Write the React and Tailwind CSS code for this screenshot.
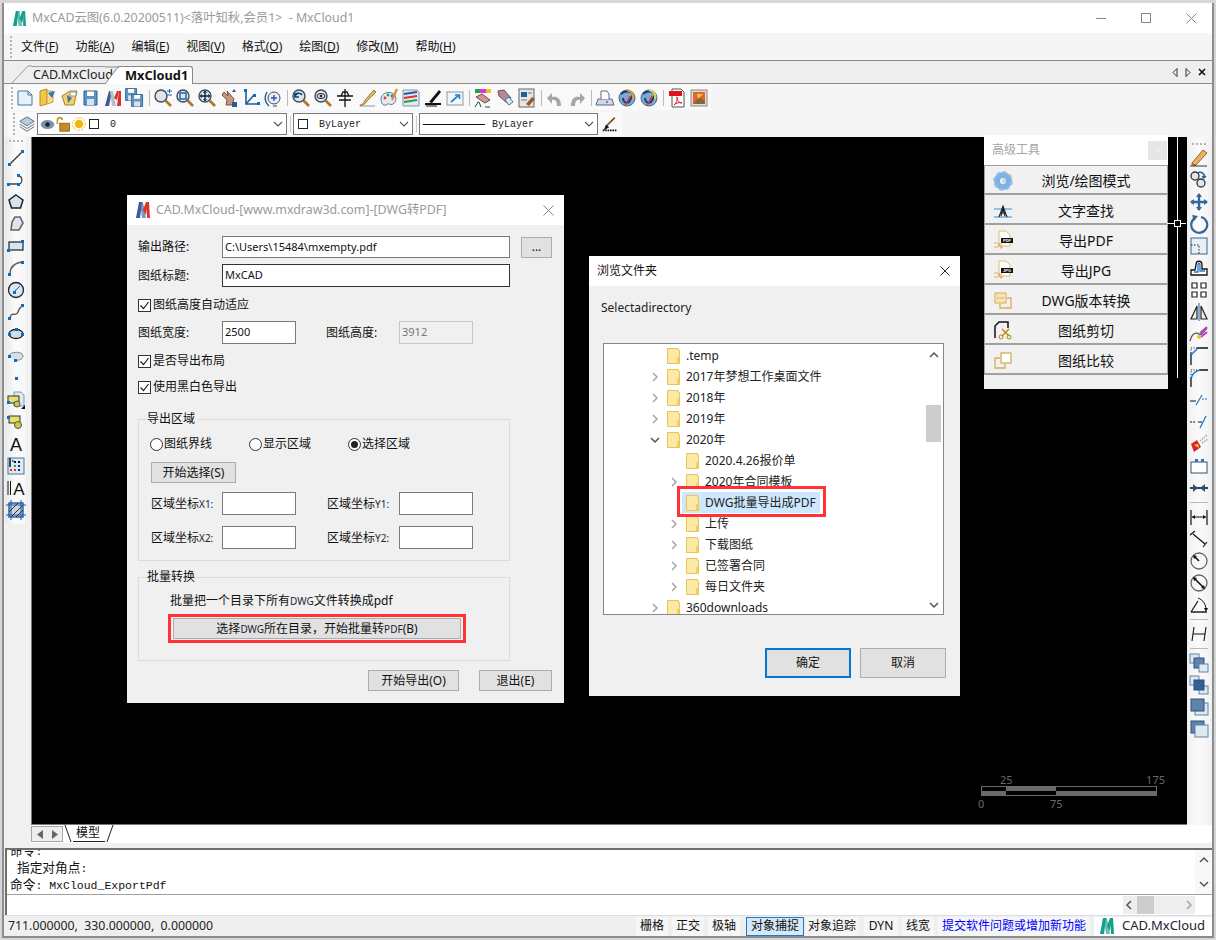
import React from "react";

const H = (x, y, s = 3) => <rect x={x} y={y} width={s} height={s} fill="#0b6bc9" />;
const Svg = ({ children, w = 20, h = 20, vb = "0 0 20 20" }) => (
  <svg width={w} height={h} viewBox={vb} fill="none" className="block shrink-0">{children}</svg>
);
const Logo = ({ w = 14, h = 16, a = "#12a08c", b = "#12a08c" }) => (
  <svg width={w} height={h} viewBox="0 0 14 16" className="block shrink-0">
    <path d="M0 16L3 0H6L4 16Z" fill={a} />
    <path d="M4 0H7L10 16H6Z" fill={a} opacity=".65" />
    <path d="M7 8L10 0H12L10 13Z" fill={b} />
    <path d="M11 0H13L14 16H11Z" fill={b} />
  </svg>
);
const Folder = () => (
  <svg width="13" height="16" viewBox="0 0 13 16" className="block shrink-0">
    <path d="M.5.5H11.5V2.5H12.5V15.5H.5Z" fill="#fde9a6" stroke="#eac455" />
    <path d="M10 9H12V15H10Z" fill="#f6cf5e" />
  </svg>
);
const Mag = ({ children }) => (
  <Svg>
    <circle cx="8" cy="8" r="6" fill="#dbe5ee" stroke="#3b4c5c" strokeWidth="1.4" />
    <path d="M12.5 12.5L18 18" stroke="#a9772e" strokeWidth="2.6" />
    {children}
  </Svg>
);
const Floppy = ({ d = 0 }) => (
  <g transform={`translate(${d} ${d})`}>
    <path d="M3 3H16V17H3Z" fill="#5d93c5" stroke="#2f5f8c" />
    <path d="M6 3.5H13V8H6Z" fill="#fff" />
    <path d="M6 11H13V17H6Z" fill="#d7e2ec" />
  </g>
);
const Globe = ({ c = "#e9a022" }) => (
  <Svg>
    <circle cx="10" cy="10" r="8" fill="#7fa8c9" stroke="#4d6c8c" />
    <path d="M4 6C8 2 15 3 16 7L12 14C9 16 6 14 6 10" stroke="#0b3f8f" strokeWidth="2" />
    <path d="M10 2C14 3 17 6 16 11" stroke={c} strokeWidth="2" />
    <path d="M8 18L13 8" stroke="#d8342c" strokeWidth="1.4" />
  </Svg>
);

const top1 = [
  <Svg><path d="M3 3H13L17 7V17H3Z" fill="#e8f0f8" stroke="#3c78a8" /><path d="M13 3V7H17" stroke="#3c78a8" /></Svg>,
  <Svg><path d="M3 3L10 1V16L3 18Z" fill="#f3c64f" stroke="#b98a25" /><path d="M10 3H16V14L10 16Z" fill="#f8dc8a" stroke="#c9a33c" /><path d="M11 5L18 3L15 10Z" fill="#1f78c8" /></Svg>,
  <Svg><path d="M3 8L11 3L18 3L15 17H6Z" fill="#f2cf69" stroke="#a98526" /><path d="M8 7L13 10L9 15Z" fill="#3d6fa8" /><path d="M11 4H17V8H11Z" fill="#fff" stroke="#999" /></Svg>,
  <Svg><Floppy /></Svg>,
  <Svg><path d="M2 18L6 3H9L6 18Z" fill="#3a5c9a" /><path d="M7 3H10L13 18H9Z" fill="#b9bfc9" /><path d="M11 10L14 3H16L14 12Z" fill="#d8342c" /><path d="M14 18L16 3H18L18 18Z" fill="#d8342c" /></Svg>,
  <Svg><g transform="translate(-2 -2) scale(.85)"><Floppy /></g><g transform="translate(4 4) scale(.85)"><Floppy /></g></Svg>,
  <Mag><path d="M14 3H19M16.5 1V5M14 7H19" stroke="#2463a8" /></Mag>,
  <Mag><rect x="5" y="5" width="6" height="6" stroke="#1f5f9e" strokeWidth="1.4" /></Mag>,
  <Mag><path d="M8 3.5V12.5M3.5 8H12.5" stroke="#123" strokeWidth="1.4" /><path d="M6.5 5L8 3L9.5 5M6.5 11L8 13L9.5 11M5 6.5L3 8L5 9.5M11 6.5L13 8L11 9.5" stroke="#123" /></Mag>,
  <Svg><path d="M3 7L8 12L7 17H13L15 11L8 3L9 8L5 4Z" fill="#c9947c" stroke="#7a5240" /><path d="M13 14H18V19H13Z" fill="#1f5f9e" /><path d="M15 1L17 4H13Z" fill="#1f5f9e" /></Svg>,
  <Svg><path d="M5 2V16H18" stroke="#1f5f9e" strokeWidth="1.6" /><path d="M5 16L13 7" stroke="#1f5f9e" strokeWidth="1.6" />{H(3, 1)}{H(16, 14)}{H(12, 6)}</Svg>,
  <Svg><circle cx="11" cy="10" r="6" fill="#e8eef4" stroke="#3b4c5c" /><path d="M8 10H14M11 7V13" stroke="#1f5f9e" strokeWidth="1.4" /><path d="M4 4C1 9 2 14 6 18" stroke="#1f5f9e" strokeWidth="1.4" /><path d="M14 18H10" stroke="#444" /></Svg>,
  <Mag><path d="M4 9C4 5 9 4 11 7M4 5V9H8" stroke="#123a70" strokeWidth="1.6" /></Mag>,
  <Mag><ellipse cx="8" cy="8" rx="4" ry="2.5" stroke="#222" /><circle cx="8" cy="8" r="1.3" fill="#222" /></Mag>,
  <Svg><path d="M10 1V19M2 8H18M4 12H16M6 8L8 4H12L14 8" stroke="#111" strokeWidth="1.3" /></Svg>,
  <Svg><path d="M3 17C7 17 7 12 9 11L17 2L19 4L10 13C9 15 7 17 3 18Z" fill="#e9b45c" stroke="#8d6426" strokeWidth=".8" /><path d="M3 18H18" stroke="#999" /></Svg>,
  <Svg><path d="M2 11C2 6 8 3 13 5C18 7 18 14 14 16C11 18 10 14 7 17C4 18 2 15 2 11Z" fill="#e4e9f0" stroke="#5a7ca3" /><circle cx="6" cy="10" r="1.4" fill="#d8342c" /><circle cx="9" cy="7" r="1.4" fill="#2f9e44" /><circle cx="13" cy="8" r="1.4" fill="#1f78c8" /><path d="M13 12L18 1" stroke="#d98b1f" strokeWidth="2" /></Svg>,
  <Svg><path d="M2 2H16L18 4V18H2Z" fill="#dfe9f2" stroke="#7a97b3" /><path d="M3 6L16 4" stroke="#1f5f9e" strokeWidth="2" /><path d="M3 10L16 8" stroke="#d8342c" strokeWidth="2" /><path d="M3 14L16 12" stroke="#2f9e44" strokeWidth="2" /></Svg>,
  <Svg><path d="M2 16H18" stroke="#111" strokeWidth="2" /><path d="M6 14L16 2L18 4L9 15Z" fill="#111" /><path d="M3 18H14" stroke="#111" /></Svg>,
  <Svg><rect x="2" y="4" width="16" height="13" fill="#f3f6f9" stroke="#8a97a3" /><path d="M6 14L14 7M10 7H14.5V11" stroke="#1f8ad1" strokeWidth="1.7" /></Svg>,
  <Svg><rect x="2" y="1" width="16" height="4" fill="#d43ad1" /><rect x="2" y="1" width="5" height="4" fill="#2f9e44" /><rect x="13" y="1" width="5" height="4" fill="#e9c522" /><path d="M3 9L9 6L17 12L12 15Z" fill="#c99" stroke="#744" /><path d="M2 19L5 14H6L8 19M12 19H17" stroke="#345" /></Svg>,
  <Svg><path d="M3 3L9 2L16 10L12 15L4 8Z" fill="#b48a94" stroke="#6a4a55" /><path d="M10 12L14 17L18 14L14 9Z" fill="#dfe9f2" stroke="#3c78a8" /></Svg>,
  <Svg><rect x="2" y="1" width="15" height="18" fill="#e6e6e6" stroke="#666" /><rect x="4" y="4" width="6" height="5" fill="#1f5f9e" /><path d="M11 5H15M4 12H10" stroke="#777" /><path d="M9 16L15 9L18 11L12 18Z" fill="#9a5a1f" /></Svg>,
  <Svg><path d="M16 18C16 10 12 8 7 9V5L2 10L7 16V12C10 11 12 13 12 18Z" fill="#a6a6a6" /></Svg>,
  <Svg><path d="M4 18C4 10 8 8 13 9V5L18 10L13 16V12C10 11 8 13 8 18Z" fill="#a6a6a6" /></Svg>,
  <Svg><path d="M3 11H17L19 17H1Z" fill="#cfd6e4" stroke="#5d6a8a" /><path d="M6 11V3H12L14 6V11" fill="#fff" stroke="#5d6a8a" /><circle cx="12" cy="14" r="1" fill="#5d6a8a" /></Svg>,
  <Globe />,
  <Globe c="#f3d24f" />,
  <Svg><path d="M5 1H14L17 4V19H5Z" fill="#fff" stroke="#555" /><rect x="2" y="3" width="13" height="5" fill="#e0141e" /><path d="M7 17C10 14 11 11 10 9C9 12 13 15 15 15C12 14 9 15 7 17Z" stroke="#e0141e" /></Svg>,
  <Svg><rect x="2" y="2" width="16" height="16" fill="#ddd" stroke="#888" /><rect x="4" y="4" width="12" height="12" fill="#e8642c" /><path d="M4 16L10 9L16 13V16Z" fill="#7c6a3a" /><path d="M8 6H14L9 11Z" fill="#f6c64a" /></Svg>,
];
const groups1 = [[0, 6], [6, 12], [12, 20], [20, 23], [23, 25], [25, 28], [28, 30]];

const left = [
  <Svg><path d="M4 16L16 4" stroke="#333" strokeWidth="1.3" />{H(2, 15)}{H(15, 2)}</Svg>,
  <Svg><path d="M3 14H13M12 6C17 6 17 13 13 14" stroke="#444" strokeWidth="1.3" />{H(1, 13)}{H(11, 13)}{H(11, 4)}</Svg>,
  <Svg><path d="M10 3L17 8L14.5 16H5.5L3 8Z" fill="#d8e4f0" stroke="#222" strokeWidth="1.5" /></Svg>,
  <Svg><path d="M9 3H14L17 9L13 16H5L6 8Z" fill="#dce6f2" stroke="#666" strokeWidth="1.6" /></Svg>,
  <Svg><rect x="3" y="6" width="14" height="8" fill="#d8e4f0" stroke="#222" strokeWidth="1.2" />{H(1, 13)}{H(15, 4)}</Svg>,
  <Svg><path d="M4 16C4 9 9 5 16 4" stroke="#665" strokeWidth="1.5" />{H(2, 15)}{H(15, 3)}</Svg>,
  <Svg><circle cx="10" cy="10" r="7.5" fill="#dde7f2" stroke="#222" strokeWidth="1.3" /><path d="M8 12L14 6" stroke="#0b6bc9" />{H(7, 11)}</Svg>,
  <Svg><path d="M4 16C6 8 10 16 12 10S15 6 16 4" stroke="#555" strokeWidth="1.4" />{H(2, 15)}{H(15, 2)}</Svg>,
  <Svg><ellipse cx="10" cy="10" rx="7" ry="4.5" fill="#cfdcea" stroke="#222" strokeWidth="1.3" />{H(9, 4)}{H(2, 9)}{H(15, 9)}</Svg>,
  <Svg><path d="M3 10C4 5 17 5 17 10C17 14 11 15 8 14" fill="#d5dfea" stroke="#888" />{H(2, 9)}{H(8, 13)}</Svg>,
  <Svg>{H(9, 9)}</Svg>,
  <Svg><path d="M8 2H15L18 5V16H8Z" fill="#dfe9f2" stroke="#7a97b3" /><rect x="2" y="6" width="11" height="7" fill="#e7e06a" stroke="#333" /><circle cx="11" cy="14" r="3" fill="#c8c84f" stroke="#555" />{H(1, 11)}<path d="M15 19L19 15V19Z" fill="#111" /></Svg>,
  <Svg><rect x="3" y="4" width="11" height="7" fill="#e7e06a" stroke="#333" /><circle cx="12" cy="13" r="3.5" fill="#c8c84f" stroke="#555" />{H(1, 4)}</Svg>,
  <Svg><text x="10" y="17" textAnchor="middle" fontSize="18" fill="#111" fontFamily="Liberation Sans">A</text></Svg>,
  <Svg><rect x="2" y="2" width="16" height="16" fill="#dfe9f2" stroke="#3c78a8" />{H(6, 4, 1.8)}<path d="M4 2V11" stroke="#111" strokeWidth="1.5" /><rect x="8" y="5" width="2" height="2" fill="#111" /><rect x="12" y="5" width="2" height="2" fill="#111" /><rect x="8" y="9" width="2" height="2" fill="#2f9e44" /><rect x="12" y="9" width="2" height="2" fill="#123a70" /><rect x="4" y="13" width="2" height="2" fill="#d8342c" /><rect x="8" y="13" width="2" height="2" fill="#d8342c" /><rect x="12" y="13" width="2" height="2" fill="#123a70" /></Svg>,
  <Svg><path d="M2 3V17M4.5 3V17" stroke="#111" /><text x="13" y="17" textAnchor="middle" fontSize="17" fill="#111" fontFamily="Liberation Sans">A</text></Svg>,
  <Svg><rect x="3" y="3" width="14" height="14" fill="#c8d4e0" stroke="#1f5f9e" strokeWidth="1.4" /><path d="M0 5H20M0 15H20M5 0V20M15 0V20" stroke="#1f5f9e" /><path d="M3 12L12 3M6 16L16 6M10 17L17 10" stroke="#333" /></Svg>,
];

const right = [
  [158, <Svg><path d="M3 15L14 2L18 5L7 17H3Z" fill="#e9b45c" stroke="#8d6426" /><path d="M3 15L7 17L5 18Z" fill="#d8342c" /><path d="M1 18H18" stroke="#333" /></Svg>],
  [180, <Svg><circle cx="6" cy="6" r="4" stroke="#333" strokeWidth="1.3" fill="#dfe6ee" /><circle cx="12" cy="13" r="4" stroke="#333" strokeWidth="1.3" fill="#dfe6ee" /><path d="M8 3C13 1 16 4 15 7M13 6L15 8L17 6" stroke="#1f5f9e" strokeWidth="1.4" /></Svg>],
  [203, <Svg><path d="M10 2V18M2 10H18" stroke="#34669a" strokeWidth="2.4" /><path d="M7 5L10 1L13 5ZM7 15L10 19L13 15ZM5 7L1 10L5 13ZM15 7L19 10L15 13Z" fill="#34669a" /></Svg>],
  [225, <Svg><path d="M6 4A8 8 0 1 0 12 3" stroke="#34669a" strokeWidth="2.2" /><path d="M3 1L9 2L5 7Z" fill="#34669a" /></Svg>],
  [247, <Svg><rect x="2" y="2" width="16" height="16" fill="#e8eef4" stroke="#34669a" /><path d="M2 9H10V18" stroke="#222" strokeDasharray="1.5 1.5" /></Svg>],
  [269, <Svg><path d="M2 17V12H6L7 7C7 2 13 2 13 7V11H18V17Z" fill="#fff" stroke="#111" strokeWidth="1.3" /><path d="M5 14H9V7C9 5 11 5 11 7V13H16" stroke="#1f78c8" strokeWidth="1.3" /></Svg>],
  [291, <Svg><path d="M3 3H8V8H3ZM12 3H17V8H12ZM3 12H8V17H3ZM12 12H17V17H12Z" fill="#fff" stroke="#222" strokeWidth="1.2" /></Svg>],
  [313, <Svg><path d="M10 1V19" stroke="#1f5f9e" /><path d="M8 4V17H2ZM12 4V17H18Z" fill="#e8eef4" stroke="#222" strokeWidth="1.2" /></Svg>],
  [336, <Svg><path d="M1 17C3 9 7 8 10 10C13 12 14 8 18 4" stroke="#555" strokeWidth="1.3" /><path d="M11 9L18 3M12 13L18 8" stroke="#c63bc9" strokeWidth="2" /><circle cx="10" cy="13" r="2" fill="#e9c522" /></Svg>],
  [358, <Svg><path d="M2 19V7M8 2H19" stroke="#111" strokeWidth="1.3" /><path d="M2 9L9 2" stroke="#1f78c8" strokeWidth="1.4" /><path d="M2 7V2H8" stroke="#111" strokeDasharray="1 1.5" /></Svg>],
  [380, <Svg><path d="M2 19V9M10 2H19" stroke="#111" strokeWidth="1.3" /><path d="M2 11C3 6 6 3 11 2" stroke="#1f78c8" strokeWidth="1.4" /><path d="M2 7V2H8" stroke="#111" strokeDasharray="1 1.5" /></Svg>],
  [401, <Svg><path d="M1 11H7" stroke="#111" /><path d="M7 15L13 5" stroke="#1f78c8" strokeWidth="1.2" /><path d="M13 9H19" stroke="#1f78c8" strokeDasharray="2 1" /></Svg>],
  [423, <Svg><path d="M1 10H7" stroke="#111" strokeDasharray="2 1" /><path d="M9 10H13" stroke="#111" /><path d="M11 16L17 4" stroke="#1f78c8" strokeWidth="1.2" /></Svg>],
  [445, <Svg><path d="M2 10L8 6L12 13L5 18Z" fill="#d8242c" /><path d="M5 11L9 10L10 14Z" fill="#f6d233" /><path d="M11 7L18 1M13 9L19 5" stroke="#aaa" strokeDasharray="1.5 1" strokeWidth="1.6" /></Svg>],
  [466, <Svg><rect x="2" y="6" width="16" height="11" fill="#fff" stroke="#34507a" /><rect x="6" y="3" width="3" height="3" fill="#1f78c8" /><rect x="12" y="3" width="3" height="3" fill="#1f78c8" /></Svg>],
  [489, <Svg><path d="M1 10H19" stroke="#111" strokeWidth="1.6" /><path d="M4 6L9 10L4 14ZM16 6L11 10L16 14Z" fill="#34507a" /></Svg>],
  [502, null],
  [517, <Svg><path d="M2 3V18M18 3V18M3 10H17" stroke="#111" strokeWidth="1.2" /><path d="M3 10L6 8V12ZM17 10L14 8V12Z" fill="#111" /></Svg>],
  [539, <Svg><path d="M1 6L6 2M14 18L18 13M4 5L16 15" stroke="#111" strokeWidth="1.2" /></Svg>],
  [561, <Svg><circle cx="10" cy="10" r="8" stroke="#666" strokeWidth="1.3" /><path d="M5 5L10 10" stroke="#111" strokeWidth="1.6" /><path d="M4 4L8 5L5 8Z" fill="#111" /></Svg>],
  [583, <Svg><circle cx="10" cy="10" r="8" stroke="#666" strokeWidth="1.3" /><path d="M5 5L15 15" stroke="#111" strokeWidth="1.6" /><path d="M4 4L8 5L5 8ZM16 16L12 15L15 12Z" fill="#111" /></Svg>],
  [605, <Svg><path d="M2 17L9 6" stroke="#111" strokeWidth="1.2" /><path d="M2 17H18" stroke="#111" strokeWidth="1.4" /><path d="M9 3C14 5 17 9 17 15" stroke="#111" /><path d="M17 17L15 13H19Z" fill="#111" /></Svg>],
  [618, null],
  [632, <Svg><path d="M5 3L3 17M17 3L15 17M4 10H16" stroke="#111" strokeWidth="1.1" /></Svg>],
  [647, null],
  [660, <Svg><rect x="1" y="1" width="9" height="9" fill="#dfe9f2" stroke="#5d84ab" /><rect x="5" y="5" width="10" height="10" fill="#5d84ab" stroke="#34507a" /><rect x="10" y="11" width="9" height="8" fill="#dfe9f2" stroke="#5d84ab" /></Svg>],
  [683, <Svg><rect x="1" y="1" width="9" height="9" fill="#dfe9f2" stroke="#5d84ab" /><rect x="10" y="11" width="9" height="8" fill="#dfe9f2" stroke="#5d84ab" /><rect x="5" y="5" width="10" height="10" fill="#34609a" stroke="#2a4a78" /></Svg>],
  [705, <Svg><rect x="6" y="6" width="13" height="12" fill="#dfe9f2" stroke="#5d84ab" /><rect x="2" y="2" width="13" height="12" fill="#5d84ab" stroke="#34507a" /></Svg>],
  [725, <Svg><rect x="2" y="2" width="13" height="12" fill="#5d84ab" stroke="#34507a" /><rect x="6" y="6" width="13" height="12" fill="#dfe9f2" stroke="#5d84ab" /></Svg>],
];

const Grip = () => (
  <span className="flex flex-col gap-[2px] w-[2px] mx-[1px]">
    {[0, 1, 2, 3, 4, 5].map((i) => <span key={i} className="w-[2px] h-[2px] bg-[#b5b5b5]" />)}
  </span>
);
const Down = () => (
  <svg width="10" height="6" viewBox="0 0 10 6" className="shrink-0"><path d="M1 1L5 5L9 1" stroke="#555" fill="none" strokeWidth="1.1" /></svg>
);
const Combo = ({ w, children }) => (
  <div className={`${w} h-[22px] bg-white border border-[#7a7a7a] flex items-center pr-[3px] font-['Liberation_Mono',monospace] text-[10px] text-[#222]`}>
    <div className="flex-1 flex items-center min-w-0">{children}</div>
    <Down />
  </div>
);
const Sq = () => <span className="block w-[10px] h-[10px] border border-[#222] bg-white shrink-0" />;

const Btn = ({ w, h = "h-[21px]", children }) => (
  <button className={`${w} ${h} bg-[#e1e1e1] border border-[#adadad] text-[12px] text-[#111] flex items-center justify-center`}>{children}</button>
);
const Input = ({ w = "w-[74px]", h = "h-[23px]", children, cls = "border-[#7a7a7a] bg-white text-[#111]" }) => (
  <div className={`${w} ${h} border ${cls} flex items-center px-[2px] text-[11px]`}>{children}</div>
);
const Check = ({ children, cls }) => (
  <div className={`flex items-center h-[16px] gap-[2px] text-[12px] text-[#111] ${cls}`}>
    <span className="w-[13px] h-[13px] border border-[#333] bg-white flex items-center justify-center">
      <svg width="11" height="11" viewBox="0 0 11 11"><path d="M1.5 5.5L4.5 8.5L9.5 2" stroke="#222" fill="none" strokeWidth="1.2" /></svg>
    </span>
    <span>{children}</span>
  </div>
);
const Radio = ({ on, children }) => (
  <div className="w-[99px] flex items-center gap-[1px] text-[12px] text-[#111]">
    <span className="w-[13px] h-[13px] rounded-full border border-[#333] bg-white flex items-center justify-center">
      {on && <span className="w-[7px] h-[7px] rounded-full bg-[#222]" />}
    </span>
    <span>{children}</span>
  </div>
);
const Sm = ({ children }) => <span className="text-[10px] text-[#223]">{children}</span>;
const CoordRow = ({ a, b, cls }) => (
  <div className={`flex items-center text-[12px] text-[#111] ${cls}`}>
    <span className="w-[71px]">区域坐标<Sm>{a}:</Sm></span>
    <Input />
    <span className="w-[72px] ml-[31px]">区域坐标<Sm>{b}:</Sm></span>
    <Input />
  </div>
);
const X = ({ c = "#666", s = 11 }) => (
  <svg width={s} height={s} viewBox="0 0 11 11"><path d="M.5.5L10.5 10.5M10.5.5L.5 10.5" stroke={c} /></svg>
);

const ExportDialog = () => (
  <div className="absolute left-[95px] top-[58px] w-[437px] h-[508px] bg-[#f0f0f0] flex flex-col">
    <div className="h-[30px] bg-white flex items-center pl-[8px] pr-[10px] shrink-0">
      <Logo w={16} h={16} a="#3a5c9a" b="#d8342c" />
      <span className="ml-[5px] text-[12.4px] text-[#9a9a9a] flex-1">CAD.MxCloud-[www.mxdraw3d.com]-[DWG转PDF]</span>
      <X c="#888" />
    </div>
    <div className="pl-[11px] pr-[12px] pt-[11px] flex flex-col">
      <div className="flex items-center text-[12px] text-[#111]">
        <span className="w-[84px]">输出路径:</span>
        <Input w="w-[288px]" h="h-[22px]">C:\Users\15484\mxempty.pdf</Input>
        <div className="ml-[11px]"><Btn w="w-[31px]">...</Btn></div>
      </div>
      <div className="flex items-center text-[12px] text-[#111] mt-[6px]">
        <span className="w-[84px]">图纸标题:</span>
        <Input w="w-[288px]" cls="border-[#333] bg-white text-[#111]">MxCAD</Input>
      </div>
      <Check cls="mt-[10px]">图纸高度自动适应</Check>
      <div className="flex items-center text-[12px] text-[#111] mt-[8px]">
        <span className="w-[84px]">图纸宽度:</span>
        <Input>2500</Input>
        <span className="w-[73px] ml-[30px]">图纸高度:</span>
        <Input cls="border-[#c8c8c8] bg-[#f0f0f0] text-[#777]">3912</Input>
      </div>
      <Check cls="mt-[9px]">是否导出布局</Check>
      <Check cls="mt-[10px]">使用黑白色导出</Check>
      <fieldset className="mt-[16px] w-[372px] h-[150px] border border-[#dcdcdc]">
        <legend className="ml-[8px] pr-[2px] text-[12px] leading-[16px] text-[#111]">导出区域</legend>
        <div className="flex pl-[11px] mt-[9px] h-[16px] items-center">
          <Radio>图纸界线</Radio><Radio>显示区域</Radio><Radio on>选择区域</Radio>
        </div>
        <div className="ml-[12px] mt-[10px]"><Btn w="w-[85px]">开始选择(S)</Btn></div>
        <CoordRow a="X1" b="Y1" cls="ml-[12px] mt-[9px]" />
        <CoordRow a="X2" b="Y2" cls="ml-[12px] mt-[11px]" />
      </fieldset>
      <fieldset className="mt-[8px] w-[372px] h-[92px] border border-[#dcdcdc]">
        <legend className="ml-[8px] pr-[2px] text-[12px] leading-[16px] text-[#111]">批量转换</legend>
        <div className="ml-[31px] mt-[8px] h-[16px] leading-[16px] text-[12px] text-[#111]">批量把一个目录下所有<Sm>DWG</Sm>文件转换成pdf</div>
        <div className="ml-[29px] mt-[5px] w-[298px] h-[29px] border-[3px] border-[#ff3333] flex items-center justify-center">
          <Btn w="w-[288px]"><span>选择<Sm>DWG</Sm>所在目录，开始批量转<Sm>PDF</Sm>(B)</span></Btn>
        </div>
      </fieldset>
      <div className="flex justify-end gap-[20px] mt-[9px]">
        <Btn w="w-[91px]">开始导出(O)</Btn>
        <Btn w="w-[73px]">退出(E)</Btn>
      </div>
    </div>
  </div>
);

const treeRows = [
  [1, null, ".temp"], [1, "r", "2017年梦想工作桌面文件"], [1, "r", "2018年"], [1, "r", "2019年"], [1, "d", "2020年"],
  [2, null, "2020.4.26报价单"], [2, "r", "2020年合同模板"], [2, null, "DWG批量导出成PDF", true], [2, "r", "上传"],
  [2, "r", "下载图纸"], [2, "r", "已签署合同"], [2, "r", "每日文件夹"], [1, "r", "360downloads"],
];
const Arrow = ({ d }) => (
  <svg width="12" height="12" viewBox="0 0 12 12" className="block shrink-0">
    <path d={d === "r" ? "M4 2L8 6L4 10" : d === "d" ? "M2 4L6 8L10 4" : d === "u" ? "M2 8L6 4L10 8" : "M8 2L4 6L8 10"} stroke={d === "r" ? "#a6a6a6" : "#555"} strokeWidth="1.5" fill="none" />
  </svg>
);

const BrowseDialog = () => (
  <div className="absolute left-[557px] top-[119px] w-[371px] h-[440px] bg-[#f0f0f0] flex flex-col">
    <div className="h-[30px] bg-white flex items-center pl-[8px] pr-[10px] shrink-0 text-[12px] text-[#111]">
      <span className="flex-1">浏览文件夹</span>
      <X c="#111" s={10} />
    </div>
    <div className="px-[14px] pt-[14px] flex flex-col">
      <div className="h-[16px] leading-[16px] text-[12px] text-[#222] -ml-[2px]">Selectadirectory</div>
      <div className="mt-[27px] w-[341px] h-[272px] border border-[#828790] bg-white flex relative overflow-hidden">
        <div className="flex-1 pt-[1px] flex flex-col min-w-0">
          {treeRows.map(([lvl, ch, t, sel]) => (
            <div key={t} className={`h-[21px] shrink-0 flex items-center ${lvl === 1 ? "pl-[45px]" : "pl-[64px]"} ${sel ? "relative z-20" : ""}`}>
              <span className="w-[18px] h-full flex items-center">{ch && <Arrow d={ch} />}</span>
              <span className={`h-full -ml-[4px] px-[4px] flex items-center gap-[6px] text-[12px] text-[#222] whitespace-nowrap ${sel ? "bg-[#cce8ff]" : ""}`}>
                <Folder />{t}
              </span>
            </div>
          ))}
        </div>
        <div className="w-[15px] mr-[2px] flex flex-col items-center pt-[5px] shrink-0">
          <Arrow d="u" />
          <div className="w-[15px] h-[37px] bg-[#cdcdcd] mt-[44px]" />
          <div className="mt-[157px]"><Arrow d="d" /></div>
        </div>
        <div className="absolute left-[73px] top-[142px] w-[149px] h-[31px] border-[3px] border-[#ff3333] bg-white z-10" />
      </div>
      <div className="flex justify-end gap-[9px] mt-[33px]">
        <Btn w="w-[86px]" h="h-[30px] !border-2 !border-[#0078d7]">确定</Btn>
        <Btn w="w-[86px]" h="h-[30px]">取消</Btn>
      </div>
    </div>
  </div>
);

const Doc = ({ label }) => (
  <Svg w={22} h={20} vb="0 0 22 20">
    <path d="M6 1H13L17 5V16H6Z" fill="#fff" stroke="#e0bd6a" />
    <rect x="8" y="8" width="12" height="5" fill="#111" />
    <text x="14" y="12" fontSize="4" fontWeight="700" fill="#fff" textAnchor="middle" fontFamily="Liberation Sans">{label}</text>
    <path d="M1 13H5L7 17H10M1 17H5L7 13M8 13V19" stroke="#d8ae55" strokeWidth=".9" />
  </Svg>
);
const tools = [
  ["浏览/绘图模式", <Svg><circle cx="10" cy="10" r="6" stroke="#7fb2e2" strokeWidth="6" /><circle cx="10" cy="10" r="9" stroke="#9cc5ea" strokeWidth="2" strokeDasharray="4 3" /><circle cx="11" cy="10" r="2" fill="#b9d6f0" /></Svg>],
  ["文字查找", <Svg><path d="M1 9H19M1 17H19" stroke="#2f8fdc" /><path d="M6 17L10 6L14 17M7.5 13H12.5M8 16L10 9L12 16" stroke="#222" strokeWidth="1.1" /></Svg>],
  ["导出PDF", <Doc label="PDF" />],
  ["导出JPG", <Doc label="JPG" />],
  ["DWG版本转换", <Svg><rect x="2" y="3" width="11" height="10" fill="#f4e3b8" stroke="#d8ae55" /><path d="M14 8H18V18H7V14" stroke="#d8ae55" strokeWidth="1.3" /><path d="M4 8H11" stroke="#b99a55" strokeDasharray="1.5 1" /></Svg>],
  ["图纸剪切", <Svg><path d="M2 18V6L6 2H15V8" stroke="#111" strokeWidth="1.5" /><path d="M9 9L16 16M16 9L9 16" stroke="#b8860b" strokeWidth="1.3" /><circle cx="8" cy="17" r="2" stroke="#b8860b" /><circle cx="16" cy="17" r="2" stroke="#b8860b" /></Svg>],
  ["图纸比较", <Svg><rect x="8" y="3" width="10" height="10" fill="#fff" stroke="#d8ae55" strokeWidth="1.3" /><path d="M7 8H2V18H12V14" stroke="#d8ae55" strokeWidth="1.3" /></Svg>],
];
const ToolPanel = () => (
  <div className="absolute left-[952px] -top-[2px] w-[184px] h-[254px] bg-[#f0f0f0] flex flex-col z-10">
    <div className="h-[30px] bg-white flex items-center pl-[8px] pr-[1px] shrink-0">
      <span className="flex-1 text-[12px] text-[#a6a6a6]">高级工具</span>
      <span className="w-[19px] h-[19px] bg-[#e6e6e6] flex items-center justify-center"><X c="#fff" s={6} /></span>
    </div>
    <div className="border-t border-[#a0a0a0]">
      {tools.map(([t, ic]) => (
        <div key={t} className="h-[30px] box-border border-x border-b-2 border-[#a0a0a0] bg-[#f1f1f1] flex items-center pl-[8px] pr-[8px] pt-[2px] first:h-[29px]">
          <span className="w-[20px] shrink-0">{ic}</span>
          <span className="flex-1 text-center text-[14px] text-[#111]">{t}</span>
        </div>
      ))}
    </div>
  </div>
);

const ScaleBar = () => (
  <div className="absolute left-[949px] top-[636px] w-[176px] text-[11px] leading-[13px] text-[#6a6a6a]">
    <div className="flex h-[13px]">
      <span className="ml-[19px] w-[50px]">25</span><span className="flex-1 text-right -mr-[8px]">175</span>
    </div>
    <div className="h-[10px] border border-[#6a6a6a] flex">
      <span className="w-[24px] mt-[4px] h-[5px] bg-[#6a6a6a]" />
      <span className="w-[50px] h-[4px] bg-[#6a6a6a]" />
      <span className="flex-1 mt-[4px] h-[5px] bg-[#6a6a6a]" />
    </div>
    <div className="flex h-[13px] mt-[1px]">
      <span className="-ml-[3px] w-[72px]">0</span><span>75</span>
    </div>
  </div>
);

const status = [
  ["w-[32px] ml-[0px]", "栅格"], ["w-[32px] ml-[4px]", "正交"], ["w-[32px] ml-[4px]", "极轴"],
];
const status2 = [["w-[52px] ml-[2px]", "对象追踪"], ["w-[34px] ml-[6px]", "DYN"], ["w-[32px] ml-[4px]", "线宽"]];
const Cn = ({ children }) => <span className="text-[12.7px]">{children}</span>;

export default function App() {
  return (
    <div className="relative w-[1216px] h-[940px] overflow-hidden bg-[#d6d6d6] pt-[3px] px-[2px] pb-[2px] font-['Noto_Sans','Noto_Sans_CJK_SC',sans-serif]">
      <div className="h-full border-x-2 border-b-2 border-[#8c8c8c] bg-[#f0f0f0] flex flex-col">
        {/* title */}
        <div className="h-[30px] bg-white flex items-center pl-[9px] shrink-0">
          <Logo w={13} h={15} />
          <span className="ml-[6px] text-[12.35px] text-[#9a9a9a] flex-1 whitespace-pre">{"MxCAD云图(6.0.20200511)<落叶知秋,会员1>  - MxCloud1"}</span>
          <div className="flex items-center">
            <span className="w-[10px] h-px bg-[#888]" />
            <span className="w-[10px] h-[10px] border border-[#888] ml-[35px]" />
            <span className="ml-[35px] mr-[15px]"><X c="#888" /></span>
          </div>
        </div>
        {/* menu */}
        <div className="h-[27px] bg-[#f5f5f5] flex items-center pl-[5px] text-[12px] text-[#111] shrink-0">
          <Grip />
          <div className="flex ml-[8px] gap-[17px]">
            {[["文件", "F"], ["功能", "A"], ["编辑", "E"], ["视图", "V"], ["格式", "O"], ["绘图", "D"], ["修改", "M"], ["帮助", "H"]].map(([a, b]) => (
              <span key={a}>{a}(<u>{b}</u>)</span>
            ))}
          </div>
        </div>
        {/* doc tabs */}
        <div className="h-[24px] border-y border-[#8c8c8c] bg-[#eeeeee] flex items-end shrink-0 text-[12.5px]">
          <svg width="20" height="18" viewBox="0 0 20 18" className="ml-[8px] shrink-0"><path d="M0 18L16 1H20" stroke="#999" fill="none" /></svg>
          <div className="h-[17px] w-[73px] border-t border-[#999] leading-[16px] pl-[1px] text-[#222] whitespace-nowrap">CAD.MxCloud</div>
          <svg width="14" height="18" viewBox="0 0 14 18" className="shrink-0 -mb-px"><path d="M0 18L13 1H14V18Z" fill="#fff" /><path d="M0 18L13 1H14M0 1H14" stroke="#888" fill="none" /></svg>
          <div className="h-[18px] w-[74px] bg-white border-t border-r border-[#888] rounded-tr-[3px] text-[12.8px] leading-[17px] pl-[6px] font-bold text-[#111] -mb-px">MxCloud1</div>
          <div className="flex-1" />
          <div className="flex items-center gap-[7px] h-full pr-[6px] text-[#111]">
            <svg width="6" height="9" viewBox="0 0 6 9"><path d="M5 .5L1 4.5L5 8.5Z" stroke="#333" fill="none" /></svg>
            <svg width="6" height="9" viewBox="0 0 6 9"><path d="M1 .5L5 4.5L1 8.5Z" stroke="#333" fill="none" /></svg>
            <svg width="8" height="8" viewBox="0 0 8 8"><path d="M1 1L7 7M7 1L1 7" stroke="#111" strokeWidth="1.6" /></svg>
          </div>
        </div>
        {/* toolbar 1 */}
        <div className="h-[27px] flex items-center shrink-0 bg-[#f5f5f5]">
          <div className="h-[25px] ml-[4px] pl-[2px] pr-[1px] bg-[#f9f9f9] rounded-[2px] flex items-center">
            <Grip />
            {groups1.map(([a, b], gi) => (
              <React.Fragment key={a}>
                {gi > 0 && <span className="w-[6px] flex justify-center"><span className="w-px h-[16px] bg-[#bbb]" /></span>}
                {top1.slice(a, b).map((ic, i) => (
                  <span key={i} className="w-[22px] h-[22px] flex items-center justify-center">{ic}</span>
                ))}
              </React.Fragment>
            ))}
          </div>
        </div>
        {/* toolbar 2 */}
        <div className="h-[26px] flex items-center shrink-0 bg-[#f5f5f5]">
          <div className="h-[24px] ml-[4px] pl-[4px] bg-[#f9f9f9] flex items-center">
            <Grip />
            <span className="w-[21px] flex justify-center">
              <Svg w={18} h={18}>
                <path d="M10 2L18 7L10 12L2 7Z" fill="#b7cbdd" stroke="#567" />
                <path d="M2 10L10 15L18 10M2 13L10 18L18 13" stroke="#567" />
              </Svg>
            </span>
            <Combo w="w-[250px]">
              <span className="ml-[2px] w-[15px]"><Svg w={15} h={15}><ellipse cx="10" cy="10" rx="9" ry="6" fill="#7c94ab" /><circle cx="10" cy="10" r="3" fill="#123" /></Svg></span>
              <Svg w={16} h={18}><path d="M5 10V5C5 1 11 1 11 5" stroke="#d39422" strokeWidth="2" transform="translate(-2 0)" /><rect x="6" y="9" width="12" height="10" fill="#c98a1f" stroke="#8a5a12" /></Svg>
              <span className="ml-[1px]"><Svg w={14} h={14}><circle cx="10" cy="10" r="6" fill="#f6b511" /><circle cx="10" cy="10" r="9" stroke="#f6c64a" strokeWidth="2" strokeDasharray="2 2" /></Svg></span>
              <span className="ml-[3px]"><Sq /></span>
              <span className="ml-[11px]">0</span>
            </Combo>
            <span className="w-[6px] flex justify-center"><span className="w-px h-[16px] bg-[#ccc]" /></span>
            <Combo w="w-[120px]">
              <span className="ml-[4px]"><Sq /></span>
              <span className="ml-[11px]">ByLayer</span>
            </Combo>
            <span className="w-[6px] flex justify-center"><span className="w-px h-[16px] bg-[#ccc]" /></span>
            <Combo w="w-[179px]">
              <span className="ml-[3px] w-[62px] h-px bg-[#111]" />
              <span className="ml-[7px]">ByLayer</span>
            </Combo>
            <span className="w-[24px] flex justify-center">
              <Svg w={16} h={16}><path d="M5 13L16 2" stroke="#7a4a1f" strokeWidth="2" /><path d="M2 18L5 11L9 14Z" fill="#111" /><path d="M1 18H18" stroke="#111" strokeDasharray="2 1" strokeWidth="2" /></Svg>
            </span>
          </div>
        </div>
        {/* main */}
        <div className="h-[706px] flex shrink-0">
          <div className="w-[27px] shrink-0 bg-[#f0f0f0] border-r-0 pl-[1px]">
            <div className="w-[21px] h-[387px] bg-gradient-to-r from-[#e9e9e9] via-[#fbfbfb] to-[#f6f6f6] rounded-b-[3px] flex flex-col items-center">
              <div className="flex gap-[2px] pt-[3px] h-[10px]">{[0, 1, 2, 3].map((i) => <span key={i} className="w-[2px] h-[2px] bg-[#b5b5b5]" />)}</div>
              {left.map((ic, i) => <span key={i} className="h-[22px] w-[22px] flex items-center justify-center">{ic}</span>)}
            </div>
          </div>
          <div className="flex-1 flex flex-col min-w-0">
            <div className="relative flex-1 bg-black border-l border-b border-[#777]">
              <ExportDialog />
              <BrowseDialog />
              <ToolPanel />
              <div className="absolute left-[1145px] top-0 w-px h-[241px] bg-white" />
              <div className="absolute left-[1135px] top-[86px] w-[19px] h-px bg-white z-20" />
              <div className="absolute left-[1142px] top-[83px] w-[7px] h-[7px] border border-white bg-black z-20" />
              <ScaleBar />
            </div>
            <div className="h-[18px] shrink-0 bg-white flex items-center">
              <div className="h-[16px] w-[32px] border border-[#a6a6a6] bg-[#eeeeee] flex items-center justify-around">
                <svg width="6" height="9" viewBox="0 0 6 9"><path d="M6 0L0 4.5L6 9Z" fill="#666" /></svg>
                <svg width="6" height="9" viewBox="0 0 6 9"><path d="M0 0L6 4.5L0 9Z" fill="#666" /></svg>
              </div>
              <svg width="9" height="18" viewBox="0 0 9 18" className="ml-[1px]"><path d="M1 0L7 17" stroke="#222" fill="none" /></svg>
              <span className="w-[32px] pl-[3px] text-[12px] text-[#111] leading-[16px] border-b border-[#222] h-[17px] self-start">模型</span>
              <svg width="9" height="18" viewBox="0 0 9 18"><path d="M8 0L2 17" stroke="#222" fill="none" /></svg>
            </div>
          </div>
          <div className="w-[25px] shrink-0 bg-[#f0f0f0] flex flex-col">
            <div className="h-[688px] bg-gradient-to-r from-[#f0f0f0] via-[#fafafa] to-[#f3f3f3] w-[23px] flex flex-col items-center">
              <div className="flex gap-[2px] pt-[6px] h-[10px] shrink-0">{[0, 1, 2, 3].map((i) => <span key={i} className="w-[2px] h-[2px] bg-[#b5b5b5]" />)}</div>
              {right.map(([y, ic], i) => (
                ic
                  ? <span key={i} className="h-[22px] w-[22px] flex items-center justify-center shrink-0">{ic}</span>
                  : <span key={i} className="w-[18px] h-[1px] bg-[#bbb] my-[3px] shrink-0" />
              ))}
            </div>
            <div className="flex-1 bg-white" />
          </div>
        </div>
        <div className="h-[5px] shrink-0 bg-[#f0f0f0]" />
        {/* command */}
        <div className="h-[67px] shrink-0 ml-[1px] border-t-2 border-l-2 border-[#6f6f6f] flex flex-col bg-white font-['Liberation_Mono','Noto_Sans_CJK_SC',monospace] text-[11.5px] text-[#111]">
          <div className="h-[45px] flex border-b border-[#a0a0a0] shrink-0">
            <div className="flex-1 flex flex-col justify-end overflow-hidden pl-[3px] leading-[17px]">
              <div className="shrink-0"><Cn>命令</Cn>:</div>
              <div className="shrink-0 pl-[7px]"><Cn>指定对角点</Cn>:</div>
              <div className="shrink-0"><Cn>命令</Cn>: MxCloud_ExportPdf</div>
            </div>
            <div className="w-[17px] bg-[#f8f8f8] flex flex-col items-center justify-between py-[4px] shrink-0">
              <Arrow d="u" /><Arrow d="d" />
            </div>
          </div>
          <div className="flex-1 flex justify-end">
            <div className="w-[72px] mr-[17px] h-[18px] mt-[1px] bg-[#eeeeee] flex items-center justify-between">
              <Arrow d="l" />
              <span className="w-[17px] h-full bg-[#cdcdcd] -ml-[28px]" />
              <Arrow d="r" />
            </div>
          </div>
        </div>
        {/* status */}
        <div className="flex-1 flex items-center bg-[#efefef] border-t border-[#ddd] text-[12px] text-[#111] pl-[4px] min-h-0">
          <span className="flex-1 whitespace-pre text-[12.3px] text-[#222]">{"711.000000,  330.000000,  0.000000"}</span>
          {status.map(([w, t]) => <span key={t} className={`${w} h-[19px] bg-[#f6f6f6] flex items-center justify-center`}>{t}</span>)}
          <span className="w-[58px] ml-[6px] h-[19px] border border-[#1f78c8] bg-[#d5e8f7] flex items-center justify-center">对象捕捉</span>
          {status2.map(([w, t]) => <span key={t} className={`${w} h-[19px] bg-[#f6f6f6] flex items-center justify-center`}>{t}</span>)}
          <span className="w-[152px] ml-[4px] h-[19px] bg-[#f6f6f6] flex items-center justify-center text-[#0000ff]">提交软件问题或增加新功能</span>
          <span className="w-[118px] ml-[4px] h-[19px] bg-white flex items-center pl-[5px] gap-[7px] text-[13px] text-[#223]">
            <Logo w={16} h={16} />CAD.MxCloud
          </span>
        </div>
      </div>
    </div>
  );
}
